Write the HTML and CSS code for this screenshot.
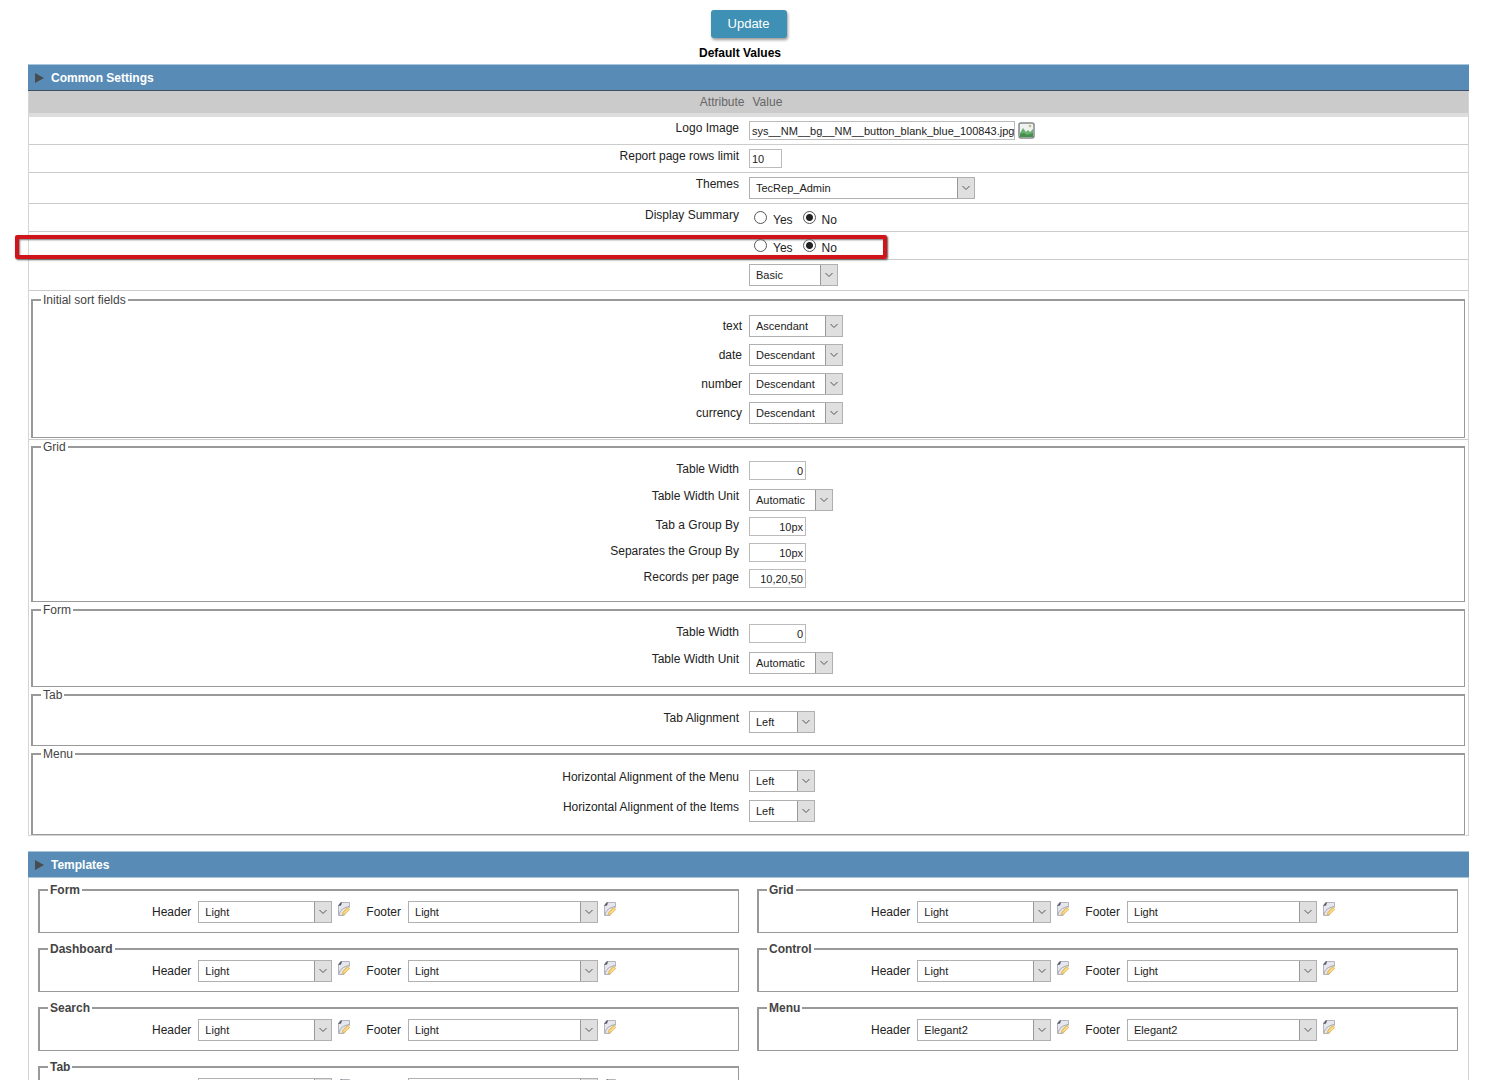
FILE: index.html
```html
<!DOCTYPE html>
<html lang="en">
<head>
<meta charset="utf-8">
<title>Default Values</title>
<link rel="stylesheet" href="styles.css">
</head>
<body>
<svg class="sprite" aria-hidden="true">
  <symbol id="edit" viewBox="0 0 16 16">
    <path d="M4.500 1.500H13.500V6L8 14.500H2.500V4.500Z" fill="#e6e6ee" stroke="#b4b4bc"/>
    <path d="M2 5L5 1.500H6L5 4.500Z" fill="#4a5060"/>
    <path d="M3 14C4 9 7 7 13 5.500" fill="none" stroke="#aaa9a4"/>
    <path d="M6 14L7 11L11.500 6.500L13.800 8.500L9 13Z" fill="#f0c860" stroke="#dcae50" stroke-width=".6"/>
    <path d="M8 12.500L12.800 7.600" stroke="#fff0c0"/>
  </symbol>
</svg>
<form class="page">
  <header class="top">
    <button type="submit" class="update">Update</button>
    <h1 class="title">Default Values</h1>
  </header>

  <section class="panel">
    <h2 class="bar bar-dark"><span class="arrow"></span>Common Settings</h2>
    <div class="columns"><span class="col-name">Attribute</span><span>Value</span></div>

    <div class="row line">
      <label for="logo">Logo Image</label>
      <div class="value"><input id="logo" class="text wide" type="text" value="sys__NM__bg__NM__button_blank_blue_100843.jpg">
        <button type="button" class="icon" aria-label="Choose image"><svg width="17" height="17" viewBox="0 0 17 17"><rect x="1" y="1" width="15" height="15" rx="2" fill="#eef3f0" stroke="#85898a" stroke-width="1.500"/><path d="M2 11L5 6L8 10L10 8L12 10L15 7V15H2Z" fill="#6bb070"/><path d="M2 12L6 11L9 13L15 11V15H2Z" fill="#44904c"/><circle cx="12" cy="4" r="1.300" fill="#c5b68e"/></svg></button></div>
    </div>
    <div class="row line">
      <label for="limit">Report page rows limit</label>
      <div class="value"><input id="limit" class="text tiny" type="text" value="10"></div>
    </div>
    <div class="row line">
      <label for="themes">Themes</label>
      <div class="value"><select id="themes" class="w-theme"><option>TecRep_Admin</option></select></div>
    </div>
    <div class="row line">
      <span class="name">Display Summary</span>
      <div class="value radios">
        <label><input type="radio" name="summary"><span>Yes</span></label>
        <label><input type="radio" name="summary" checked><span>No</span></label>
      </div>
    </div>
    <div class="row line marked">
      <span class="name"></span>
      <div class="value radios">
        <label><input type="radio" name="option"><span>Yes</span></label>
        <label><input type="radio" name="option" checked><span>No</span></label>
      </div>
    </div>
    <div class="row line">
      <span class="name"></span>
      <div class="value"><select class="w-basic" aria-label="Mode"><option>Basic</option></select></div>
    </div>

    <div class="sorting">
      <fieldset class="group sort">
        <legend>Initial sort fields</legend>
        <div class="pair"><label for="s1">text</label><select id="s1" class="w-sort"><option>Ascendant</option></select></div>
        <div class="pair"><label for="s2">date</label><select id="s2" class="w-sort"><option>Descendant</option></select></div>
        <div class="pair"><label for="s3">number</label><select id="s3" class="w-sort"><option>Descendant</option></select></div>
        <div class="pair"><label for="s4">currency</label><select id="s4" class="w-sort"><option>Descendant</option></select></div>
      </fieldset>
    </div>

    <fieldset class="group">
      <legend>Grid</legend>
      <div class="row"><label for="g1">Table Width</label><div class="value"><input id="g1" class="text num" type="text" value="0"></div></div>
      <div class="row pick"><label for="g2">Table Width Unit</label><div class="value"><select id="g2" class="w-unit"><option>Automatic</option></select></div></div>
      <div class="row"><label for="g3">Tab a Group By</label><div class="value"><input id="g3" class="text num" type="text" value="10px"></div></div>
      <div class="row"><label for="g4">Separates the Group By</label><div class="value"><input id="g4" class="text num" type="text" value="10px"></div></div>
      <div class="row"><label for="g5">Records per page</label><div class="value"><input id="g5" class="text num" type="text" value="10,20,50"></div></div>
    </fieldset>
    <fieldset class="group">
      <legend>Form</legend>
      <div class="row"><label for="f1">Table Width</label><div class="value"><input id="f1" class="text num" type="text" value="0"></div></div>
      <div class="row pick"><label for="f2">Table Width Unit</label><div class="value"><select id="f2" class="w-unit"><option>Automatic</option></select></div></div>
    </fieldset>
    <fieldset class="group">
      <legend>Tab</legend>
      <div class="row pick"><label for="t1">Tab Alignment</label><div class="value"><select id="t1" class="w-align"><option>Left</option></select></div></div>
    </fieldset>
    <fieldset class="group">
      <legend>Menu</legend>
      <div class="row pick"><label for="m1">Horizontal Alignment of the Menu</label><div class="value"><select id="m1" class="w-align"><option>Left</option></select></div></div>
      <div class="row pick"><label for="m2">Horizontal Alignment of the Items</label><div class="value"><select id="m2" class="w-align"><option>Left</option></select></div></div>
    </fieldset>
  </section>

  <section class="panel">
    <h2 class="bar"><span class="arrow"></span>Templates</h2>
    <div class="templates">
      <fieldset class="template">
        <legend>Form</legend>
        <div class="parts">
          <label for="h1">Header</label><select id="h1" class="w-header"><option>Light</option></select><button type="button" class="icon edit" aria-label="Edit header"><svg width="16" height="16"><use href="#edit"/></svg></button>
          <label for="b1">Footer</label><select id="b1" class="w-footer"><option>Light</option></select><button type="button" class="icon" aria-label="Edit footer"><svg width="16" height="16"><use href="#edit"/></svg></button>
        </div>
      </fieldset>
      <fieldset class="template">
        <legend>Grid</legend>
        <div class="parts">
          <label for="h2">Header</label><select id="h2" class="w-header"><option>Light</option></select><button type="button" class="icon edit" aria-label="Edit header"><svg width="16" height="16"><use href="#edit"/></svg></button>
          <label for="b2">Footer</label><select id="b2" class="w-footer"><option>Light</option></select><button type="button" class="icon" aria-label="Edit footer"><svg width="16" height="16"><use href="#edit"/></svg></button>
        </div>
      </fieldset>
      <fieldset class="template">
        <legend>Dashboard</legend>
        <div class="parts">
          <label for="h3">Header</label><select id="h3" class="w-header"><option>Light</option></select><button type="button" class="icon edit" aria-label="Edit header"><svg width="16" height="16"><use href="#edit"/></svg></button>
          <label for="b3">Footer</label><select id="b3" class="w-footer"><option>Light</option></select><button type="button" class="icon" aria-label="Edit footer"><svg width="16" height="16"><use href="#edit"/></svg></button>
        </div>
      </fieldset>
      <fieldset class="template">
        <legend>Control</legend>
        <div class="parts">
          <label for="h4">Header</label><select id="h4" class="w-header"><option>Light</option></select><button type="button" class="icon edit" aria-label="Edit header"><svg width="16" height="16"><use href="#edit"/></svg></button>
          <label for="b4">Footer</label><select id="b4" class="w-footer"><option>Light</option></select><button type="button" class="icon" aria-label="Edit footer"><svg width="16" height="16"><use href="#edit"/></svg></button>
        </div>
      </fieldset>
      <fieldset class="template">
        <legend>Search</legend>
        <div class="parts">
          <label for="h5">Header</label><select id="h5" class="w-header"><option>Light</option></select><button type="button" class="icon edit" aria-label="Edit header"><svg width="16" height="16"><use href="#edit"/></svg></button>
          <label for="b5">Footer</label><select id="b5" class="w-footer"><option>Light</option></select><button type="button" class="icon" aria-label="Edit footer"><svg width="16" height="16"><use href="#edit"/></svg></button>
        </div>
      </fieldset>
      <fieldset class="template">
        <legend>Menu</legend>
        <div class="parts">
          <label for="h6">Header</label><select id="h6" class="w-header"><option>Elegant2</option></select><button type="button" class="icon edit" aria-label="Edit header"><svg width="16" height="16"><use href="#edit"/></svg></button>
          <label for="b6">Footer</label><select id="b6" class="w-footer"><option>Elegant2</option></select><button type="button" class="icon" aria-label="Edit footer"><svg width="16" height="16"><use href="#edit"/></svg></button>
        </div>
      </fieldset>
      <fieldset class="template">
        <legend>Tab</legend>
        <div class="parts">
          <label for="h7">Header</label><select id="h7" class="w-header"><option>Light</option></select><button type="button" class="icon edit" aria-label="Edit header"><svg width="16" height="16"><use href="#edit"/></svg></button>
          <label for="b7">Footer</label><select id="b7" class="w-footer"><option>Light</option></select><button type="button" class="icon" aria-label="Edit footer"><svg width="16" height="16"><use href="#edit"/></svg></button>
        </div>
      </fieldset>
    </div>
  </section>
</form>
</body>
</html>
```
FILE: styles.css
```css
* { box-sizing: border-box; }

body {
  margin: 0;
  background: #fff;
  color: #222;
  font: 12px/14px "Liberation Sans", Arial, sans-serif;
}

.sprite { display: none; }

.page { padding: 10px 28px 0; }

/* Page head */
.top { text-align: center; }

.update {
  display: block;
  width: 76px;
  height: 28px;
  margin: 0 auto;
  padding: 0;
  border: 0;
  border-radius: 3px;
  background: #3e90b4;
  box-shadow: 1px 2px 3px #999;
  color: #fff;
  font: 13px/26px "Liberation Sans", Arial, sans-serif;
}

.title {
  margin: 0;
  padding: 8px 17px 4px 0;
  color: #000;
  font-size: 12px;
  line-height: 14px;
}

/* Panels */
.panel {
  margin-bottom: 15px;
  border: 1px solid #d5d5d5;
  border-top: 0;
}

.bar {
  display: flex;
  align-items: center;
  gap: 7px;
  height: 27px;
  margin: 0 -1px;
  padding: 0 7px;
  border-top: 1px solid #a9c5dc;
  border-bottom: 1px solid #a9c5dc;
  background: #588cb6;
  color: #fff;
  font-size: 12px;
}

.bar-dark { border-bottom-color: #3d4f60; }

.arrow {
  border: 5px solid transparent;
  border-left: 9px solid #474c50;
  border-right: 0;
}

.columns {
  display: grid;
  grid-template-columns: 1fr 1fr;
  column-gap: 8px;
  height: 26px;
  padding-top: 4px;
  border-bottom: 4px solid #ddd;
  background: #cbcbcb;
  color: #666;
}

.col-name { text-align: right; }

/* Attribute rows */
.row {
  display: grid;
  grid-template-columns: 1fr 1fr;
  column-gap: 10px;
  padding: 3px 9px 4px 0;
}

.row > label,
.name {
  padding-top: 1px;
  text-align: right;
}

.value {
  display: flex;
  align-items: center;
  gap: 3px;
}

.pick {
  padding-top: 5px;
  padding-bottom: 3px;
}

.pick > label { padding-top: 0; }

.line {
  padding-top: 4px;
  border-bottom: 1px solid #ccc;
}

.line > label,
.line > .name {
  padding-top: 0;
}

.radios {
  gap: 10px;
  padding-left: 5px;
}

.radios label {
  display: flex;
  align-items: center;
  gap: 6px;
  height: 19px;
}

.radios span { padding-top: 4px; }

.radios input {
  appearance: none;
  width: 13px;
  height: 13px;
  margin: 0;
  border: 1px solid #555;
  border-radius: 50%;
  background: #fff;
}

.radios input:checked { background: radial-gradient(circle, #222 3px, #fff 4px); }

/* Callout drawn over the highlighted row */
.marked { position: relative; }

.marked::after {
  content: "";
  position: absolute;
  top: 3px;
  right: calc(50% - 138px);
  bottom: 0;
  left: -14px;
  border: 4px solid #cf1519;
  border-radius: 2px;
  box-shadow: 1px 1px 2px #555, inset 1px 1px 2px #777;
  pointer-events: none;
}

/* Controls */
.text {
  height: 19px;
  padding: 0 2px;
  border: 1px solid #bbb;
  background: #fff;
  color: #222;
  font: 11px "Liberation Sans", Arial, sans-serif;
}

.wide { width: 266px; padding-right: 0; }
.tiny { width: 33px; }
.num { width: 57px; text-align: right; }

select {
  appearance: none;
  height: 22px;
  padding: 0 18px 0 6px;
  border: 1px solid #b0b0b0;
  border-radius: 0;
  background: #fff url("data:image/svg+xml,%3Csvg xmlns='http://www.w3.org/2000/svg' width='18' height='22'%3E%3Crect x='.5' y='.5' width='17' height='21' fill='%23dfdfdf' stroke='%23999'/%3E%3Cpath d='M5.500 9L9 12.500L12.500 9' fill='none' stroke='%23555'/%3E%3C/svg%3E") right top no-repeat border-box;
  color: #222;
  font: 11px "Liberation Sans", Arial, sans-serif;
}

.w-theme { width: 226px; }
.w-basic { width: 89px; }
.w-sort { width: 94px; }
.w-unit { width: 84px; }
.w-align { width: 66px; }
.w-header { width: 134px; }
.w-footer { width: 190px; }

.icon {
  padding: 0;
  border: 0;
  background: none;
}

.icon svg { display: block; }

/* Fieldsets */
fieldset {
  min-width: 0;
  border: 2px solid #999;
  border-right: 1px solid #999;
  border-bottom: 1px solid #999;
}

legend {
  padding: 0 2px;
  color: #444;
}

.group {
  margin: 0 3px 1px 2px;
  padding: 4px 0 9px;
}

.group legend { margin-left: 8px; }

.group:last-child { margin-bottom: 0; }

.sorting {
  padding: 2px 0 1px;
  border-bottom: 1px solid #ccc;
}

.sort {
  display: flex;
  flex-direction: column;
  gap: 7px;
  padding: 8px 0 13px;
}

.pair {
  display: grid;
  grid-template-columns: 1fr 1fr;
  column-gap: 7px;
  align-items: center;
  padding-right: 6px;
}

.pair label { text-align: right; }

/* Templates */
.templates {
  display: grid;
  grid-template-columns: 1fr 1fr;
  gap: 9px 18px;
  padding: 5px 10px 9px 9px;
}

.template {
  margin: 0;
  padding: 4px 8px 9px 0;
}

.template legend {
  margin-left: 8px;
  font-weight: bold;
}

.parts {
  display: flex;
  justify-content: center;
}

.parts label {
  padding: 4px 7px 0 0;
}

.parts .icon {
  align-self: flex-start;
  margin-left: 4px;
}

.parts .edit { margin-right: 14px; }
```
